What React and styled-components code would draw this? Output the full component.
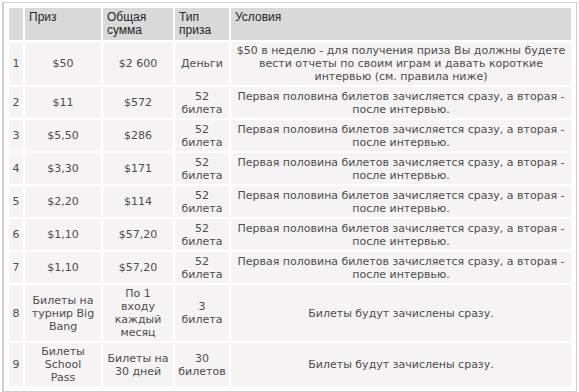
import React from "react";
import styled, { createGlobalStyle } from "styled-components";

const Global = createGlobalStyle`
  html, body { margin: 0; padding: 0; background: #ffffff; }
  body { font-family: "DejaVu Sans", Verdana, sans-serif; }
`;

const Frame = styled.div`
  margin: 2px 2px 0 2px;
  border: 1px solid #cfcfcf;
  border-left-width: 2px;
  padding: 3px;
  background: #fff;
`;

const Table = styled.table`
  width: 100%;
  table-layout: fixed;
  border-collapse: separate;
  border-spacing: 2px;
`;

const Col = styled.col`
  width: ${(p) => (p.$w ? `${p.$w}px` : "auto")};
`;

const Head = styled.th`
  background: #d9d9d9;
  color: #262626;
  font-family: "Liberation Sans", Arial, sans-serif;
  font-size: 12px;
  font-weight: normal;
  line-height: 13px;
  text-align: left;
  vertical-align: top;
  padding: 3px 3px 3px 4px;
  height: 26px;
`;

const heights = { 2: 27, 3: 39, 4: 52 };

const Cell = styled.td`
  background: #f5f3f3;
  color: #4d4d4d;
  font-size: 11px;
  line-height: 13px;
  text-align: center;
  vertical-align: middle;
  padding: 2px ${(p) => p.$px ?? 3}px;
  height: ${(p) => heights[p.$lines]}px;
`;

const half = "Первая половина билетов зачисляется сразу, а вторая - после интервью.";

const rows = [
  ["1", "$50", "$2 600", "Деньги", "$50 в неделю - для получения приза Вы должны будете вести отчеты по своим играм и давать короткие интервью (см. правила ниже)", 3],
  ["2", "$11", "$572", "52 билета", half, 2],
  ["3", "$5,50", "$286", "52 билета", half, 2],
  ["4", "$3,30", "$171", "52 билета", half, 2],
  ["5", "$2,20", "$114", "52 билета", half, 2],
  ["6", "$1,10", "$57,20", "52 билета", half, 2],
  ["7", "$1,10", "$57,20", "52 билета", half, 2],
  ["8", "Билеты на турнир Big Bang", "По 1 входу каждый месяц", "3 билета", "Билеты будут зачислены сразу.", 4],
  ["9", "Билеты School Pass", "Билеты на 30 дней", "30 билетов", "Билеты будут зачислены сразу.", 3],
];

export default function App() {
  return (
    <>
      <Global />
      <Frame>
        <Table>
          <colgroup>
            <Col $w={14} />
            <Col $w={76} />
            <Col $w={70} />
            <Col $w={54} />
            <Col />
          </colgroup>
          <thead>
            <tr>
              <Head></Head>
              <Head>Приз</Head>
              <Head>Общая сумма</Head>
              <Head>Тип приза</Head>
              <Head>Условия</Head>
            </tr>
          </thead>
          <tbody>
            {rows.map((r) => (
              <tr key={r[0]}>
                <Cell $lines={r[5]} $px={1}>{r[0]}</Cell>
                <Cell $lines={r[5]} $px={6}>{r[1]}</Cell>
                <Cell $lines={r[5]} $px={4}>{r[2]}</Cell>
                <Cell $lines={r[5]} $px={3}>{r[3]}</Cell>
                <Cell $lines={r[5]}>{r[4]}</Cell>
              </tr>
            ))}
          </tbody>
        </Table>
      </Frame>
    </>
  );
}
